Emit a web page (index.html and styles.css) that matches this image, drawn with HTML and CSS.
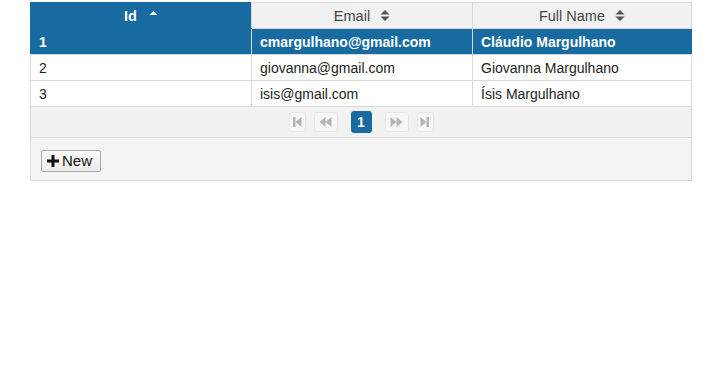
FILE: index.html
```html
<!DOCTYPE html>
<html>
<head>
<meta charset="utf-8">
<link rel="stylesheet" href="styles.css">
</head>
<body>
<div class="page">
  <div class="datatable">
    <table class="grid">
      <thead>
        <tr>
          <th class="sorted"><span class="label">Id</span>
            <svg class="sort up" width="9" height="10" viewBox="0 0 9 10"><path d="M0.5 6 L4.5 2 L8.5 6 Z" fill="#fff"/></svg>
          </th>
          <th><span class="label">Email</span>
            <svg class="sort" width="10" height="13" viewBox="0 0 10 13"><path d="M0.5 5.5 L5 1 L9.5 5.5 Z M0.5 7.5 L5 12 L9.5 7.5 Z" fill="#555"/></svg>
          </th>
          <th><span class="label">Full Name</span>
            <svg class="sort" width="10" height="13" viewBox="0 0 10 13"><path d="M0.5 5.5 L5 1 L9.5 5.5 Z M0.5 7.5 L5 12 L9.5 7.5 Z" fill="#555"/></svg>
          </th>
        </tr>
      </thead>
      <tbody>
        <tr class="selected"><td>1</td><td>cmargulhano@gmail.com</td><td>Cláudio Margulhano</td></tr>
        <tr><td>2</td><td>giovanna@gmail.com</td><td>Giovanna Margulhano</td></tr>
        <tr><td>3</td><td>isis@gmail.com</td><td>Ísis Margulhano</td></tr>
      </tbody>
    </table>
    <div class="paginator">
      <span class="pbtn disabled">
        <svg width="10" height="12" viewBox="0 0 10 12"><rect x="1" y="1" width="2.5" height="10" fill="#b4b4b4"/><path d="M9.5 1 L3.5 6 L9.5 11 Z" fill="#b4b4b4"/></svg>
      </span>
      <span class="pbtn wide disabled">
        <svg width="13" height="12" viewBox="0 0 13 12"><path d="M6.5 1 L0.5 6 L6.5 11 Z M12.5 1 L6.5 6 L12.5 11 Z" fill="#b4b4b4"/></svg>
      </span>
      <span class="page-num">1</span>
      <span class="pbtn wide disabled">
        <svg width="13" height="12" viewBox="0 0 13 12"><path d="M0.5 1 L6.5 6 L0.5 11 Z M6.5 1 L12.5 6 L6.5 11 Z" fill="#b4b4b4"/></svg>
      </span>
      <span class="pbtn disabled">
        <svg width="10" height="12" viewBox="0 0 10 12"><path d="M0.5 1 L6.5 6 L0.5 11 Z" fill="#b4b4b4"/><rect x="6.5" y="1" width="2.5" height="10" fill="#b4b4b4"/></svg>
      </span>
    </div>
    <div class="footer">
      <button class="btn">
        <svg width="12" height="12" viewBox="0 0 12 12"><path d="M4.5 0 H7.5 V4.5 H12 V7.5 H7.5 V12 H4.5 V7.5 H0 V4.5 H4.5 Z" fill="#111"/></svg>
        <span>New</span>
      </button>
    </div>
  </div>
</div>
</body>
</html>
```

FILE: styles.css
```css
html, body {
  margin: 0;
  padding: 0;
  background: #fff;
}

.page {
  padding: 2px 0 0 30px;
  font-family: "Liberation Sans", Arial, sans-serif;
  font-size: 14px;
  color: #222;
}

.datatable {
  width: 662px;
  box-sizing: border-box;
}

.grid {
  width: 662px;
  border-collapse: collapse;
  table-layout: fixed;
}

.grid th {
  height: 25px;
  padding: 0;
  border: 1px solid #d9d9d9;
  background: #f1f1f2;
  color: #444;
  font-weight: normal;
  font-size: 14.5px;
  text-align: center;
  vertical-align: middle;
}

.grid th:nth-child(1), .grid th:nth-child(2) {
  width: 220px;
}

.grid th.sorted {
  background: #186ba0;
  border-color: #186ba0;
  border-right-color: #d9d9d9;
  color: #fff;
  font-weight: bold;
}

.grid th .label {
  vertical-align: middle;
}

.grid th .sort {
  margin-left: 6px;
  vertical-align: middle;
  position: relative;
  top: -1px;
}

.grid th .sort.up {
  margin-left: 8px;
  top: -2px;
}

.grid td {
  height: 25px;
  padding: 0 8px;
  border: 1px solid #d9d9d9;
  background: #fff;
  color: #222;
  font-size: 14px;
  vertical-align: middle;
  white-space: nowrap;
}

.grid tr.selected td {
  background: #186ba0;
  color: #fff;
  font-weight: bold;
  border-top-color: #186ba0;
  border-bottom-color: #d9d9d9;
}

.grid tr.selected td:first-child {
  border-left-color: #186ba0;
}

.grid tr.selected td:last-child {
  border-right-color: #186ba0;
}

.paginator {
  height: 30px;
  border: 1px solid #d9d9d9;
  border-top: none;
  background: #f1f1f2;
  display: flex;
  align-items: center;
  justify-content: center;
  gap: 8px;
}

.pbtn {
  height: 20px;
  width: 17px;
  border: 1px solid #e6e6e6;
  border-radius: 3px;
  background: #f6f6f6;
  display: flex;
  align-items: center;
  justify-content: center;
  box-sizing: border-box;
}

.pbtn.wide {
  width: 24px;
}

.page-num {
  width: 21px;
  height: 22px;
  border-radius: 3px;
  background: #186ba0;
  color: #fff;
  font-weight: bold;
  font-size: 14px;
  display: flex;
  align-items: center;
  justify-content: center;
  margin: 0 5px;
}

.footer {
  height: 43px;
  border: 1px solid #d9d9d9;
  border-top: none;
  background: #f4f4f5;
  display: flex;
  align-items: center;
  padding-left: 10px;
  box-sizing: border-box;
}

.btn {
  height: 22px;
  width: 60px;
  padding: 0 0 0 5px;
  border: 1px solid #a8a8a8;
  border-radius: 2px;
  background: linear-gradient(#fafafa, #ececec);
  font-family: "Liberation Sans", Arial, sans-serif;
  font-size: 15px;
  color: #111;
  display: flex;
  align-items: center;
  gap: 3px;
  margin-top: 3px;
}
```
